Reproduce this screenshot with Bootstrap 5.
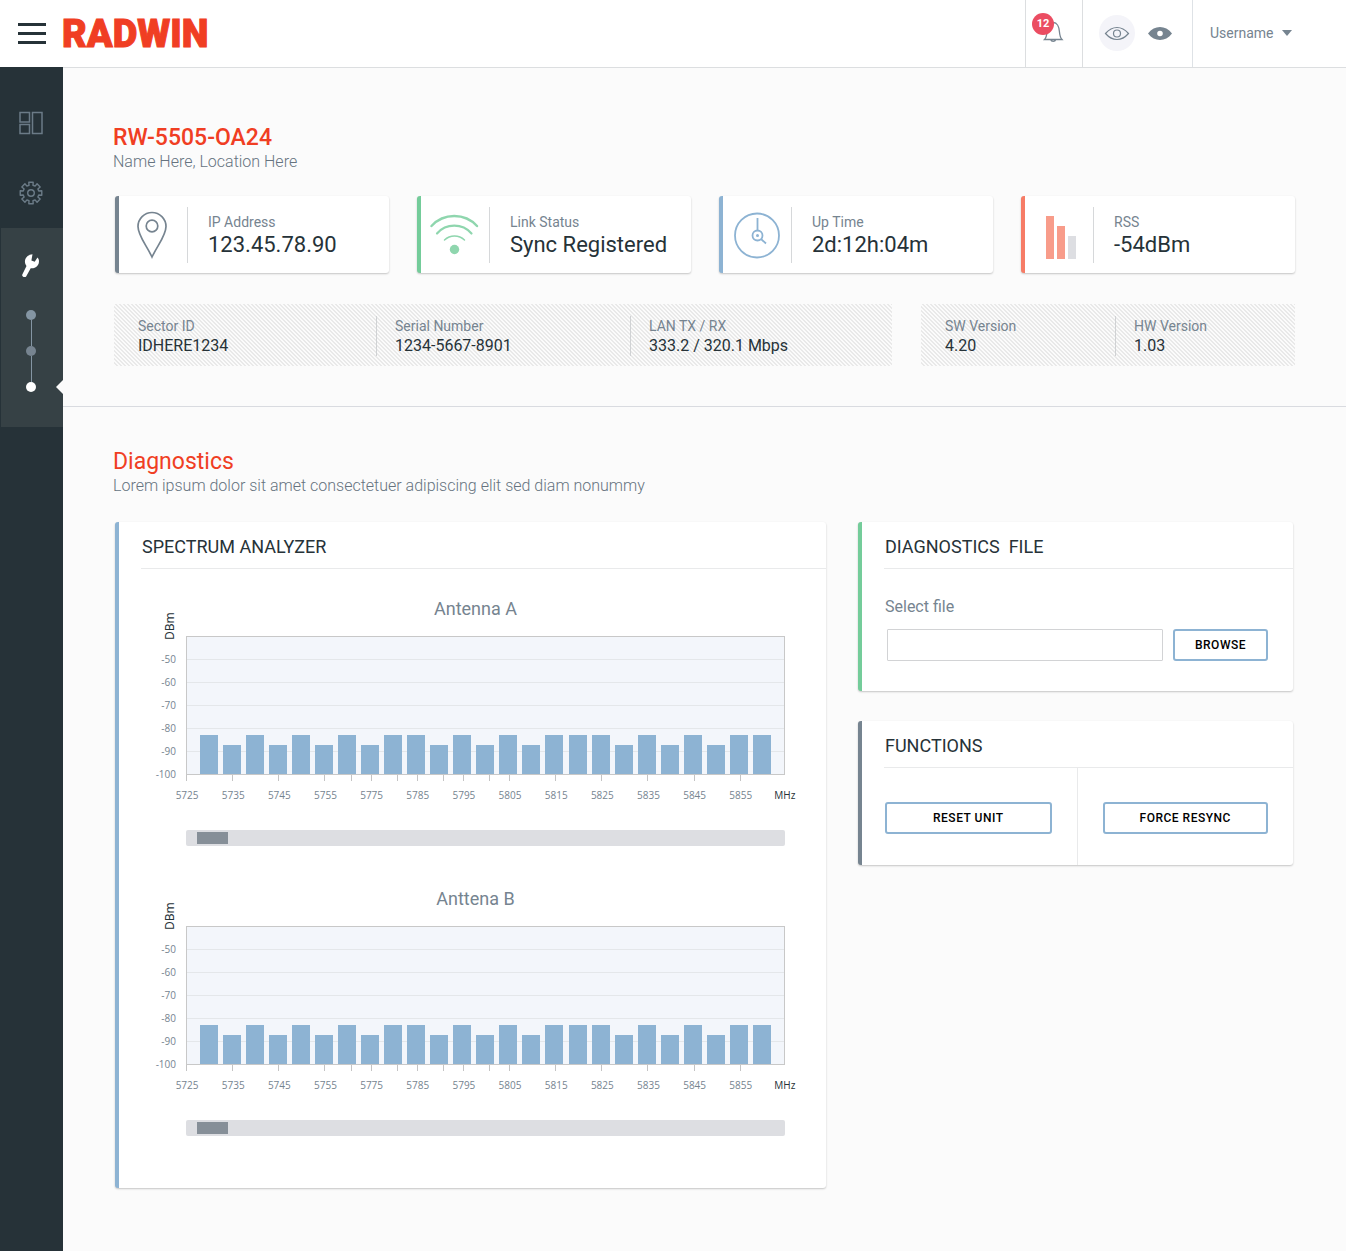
<!DOCTYPE html>
<html lang="en">
<head>
<meta charset="utf-8">
<meta name="viewport" content="width=device-width, initial-scale=1">
<title>RADWIN – Diagnostics</title>
<link rel="stylesheet" href="https://cdn.jsdelivr.net/npm/bootstrap@5.3.0/dist/css/bootstrap.min.css">
<style>
:root{--ink:#263238;--slate:#768490;--brand:#f03e23;--blue:#8db3d3;--green:#74cc9a;--line:#dcdee0}
body{font-family:Roboto,"Liberation Sans",sans-serif;color:var(--ink);background:#fbfbfb;font-size:14px;line-height:20px}
.topbar{height:68px;padding:0;background:#fff;border-bottom:1px solid var(--line)}
.burger{width:28px;height:21px;margin:0 16px 0 18px;padding:0;border:0;background:none}
.burger span{display:block;height:3px;background:var(--ink)}
.wordmark{font-size:38px;font-weight:900;line-height:69px;color:var(--brand);margin:0;padding:0;-webkit-text-stroke:1px var(--brand)}
.wordmark:hover{color:var(--brand)}
.cell{border-left:1px solid var(--line)}
.iconbtn{width:36px;height:36px;padding:0;border:0;border-radius:50%;background:none;color:var(--slate)}
.iconbtn svg{display:block}
.iconbtn.current{background:#f4f4f9}
.eyes{gap:7px;padding:0 14px 1px 16px}
.bell{width:57px;padding-bottom:3px}
.bell .count{top:13px;left:6px;width:22px;height:22px;border-radius:50%;background:#eb4d62;color:#fff;font:700 11px/22px Roboto,sans-serif}
.user{width:154px;padding:0 0 1px 17px;color:var(--slate);border:0;background:none}
.rail{width:63px;flex:none;background:var(--ink);padding-top:32px;margin-top:-1px;z-index:1}
.rail a{display:flex;justify-content:center;align-items:center;height:48px;padding-right:2px;color:#6b7b87}
.rail .gearlink{margin-top:22px}
.rail .tool{margin:11px 0 0 1px;height:199px;background:#364145;padding-top:14px}
.rail .tool a{color:#fff}
.steps{margin-top:20px;padding-right:2px}
.rail .steps a{height:10px;width:10px;padding:0;border-radius:50%;background:#778490}
.rail .steps a:first-child{background:#8495a3}
.rail .steps a.now{background:#fff}
.steps i{width:1px;height:26px;background:#8495a3}
.notch{right:0;bottom:33px;border:7px solid transparent;border-right-color:#fbfbfb;border-left:0}
.summary{padding:57px 51px 40px 51px;border-bottom:1px solid #d9dbe0}
.detail{padding:42px 51px 62px 51px}
h1,h2{font-size:23px;line-height:26px;margin:0 0 0 -1px;color:var(--brand)}
h1{font-weight:500}
h2{font-weight:400}
.lede{font-size:16px;font-weight:300;line-height:22px;color:#66737f;margin:0 0 0 -1px}
.panel{background:#fff;border-left:4px solid var(--slate);border-radius:3px;box-shadow:0 1px 2px rgba(0,0,0,.22)}
.tone-green{border-color:var(--green)}
.tone-blue{border-color:var(--blue)}
.tone-red{border-color:#f67c66}
.tiles{display:grid;grid-template-columns:repeat(4,1fr);gap:28px;margin:23px 0 0 1px}
.tile{height:77px;padding:11px 0 10px}
.tile .pic{width:69px;border-right:1px solid #d6d8da}
.tile .txt{padding-left:20px}
.cap{font-size:14px;line-height:20px;color:var(--slate)}
.big{font-size:22px;line-height:26px}
.facts{gap:29px;margin-top:31px}
.facts .wide{flex:778 1 0;grid-template-columns:262fr 254fr 262fr}
.facts .narrow{flex:374 1 0;grid-template-columns:194fr 180fr}
.hatch{display:grid;height:62px;background-image:linear-gradient(45deg,#e9e9e9 25%,transparent 25%,transparent 50%,#e9e9e9 50%,#e9e9e9 75%,transparent 75%);background-size:4px 4px;padding:12px 0 10px}
.fact{padding-left:18px;border-left:1px solid #d0d2d4}
.fact:first-child{border-left:0;padding-left:24px}
.fact .val{font-size:16px;line-height:20px}
.duo{display:grid;grid-template-columns:711fr 435fr;gap:32px;margin:25px 2px 0 1px;align-items:start}
.head{font-size:18px;line-height:26px;font-weight:400;color:var(--ink);margin:0 0 0 22px;padding:12px 0 8px 1px;border-bottom:1px solid #e9eaeb;height:47px}
.charts{padding:28px 17px 52px 23px}
.chart+.chart{margin-top:41px}
.chart h4{font-size:18px;line-height:24px;font-weight:400;color:var(--slate);text-align:center;margin:0 0 -7px}
.plotrow{margin-right:24px}
.yaxis{width:34px;margin-right:10px;font:10px/23px "Open Sans",sans-serif;color:var(--slate);text-align:right}
.yaxis .unit{writing-mode:vertical-rl;transform:rotate(180deg);height:26px;font:12px/12px "Noto Sans",sans-serif;color:var(--ink);margin:0 0 8px auto}
.plotcol{padding-top:22px}
.plot{height:139px;border:1px solid #c8c8c8;background:#f3f6fb repeating-linear-gradient(transparent 0 22px,#e4e7ea 22px 23px);padding:0 13px}
.plot b{width:18px;background:var(--blue)}
.xaxis{margin:0 -22px 0 -23px;font:10px/14px "Open Sans",sans-serif;color:var(--slate);text-align:center}
.xaxis span{flex:1 1 0;height:34px;padding:13px 0 0 2px;background:linear-gradient(#c4c4c4,#c4c4c4) 23px 0/1px 6px no-repeat}
.xaxis span.minor{background:linear-gradient(#c4c4c4,#c4c4c4) 23px 0/1px 6px no-repeat,linear-gradient(#c4c4c4,#c4c4c4) 3px 0/1px 6px no-repeat}
.xaxis span.mhz{background:none;color:var(--ink);padding-left:0}
.pan{display:block;-webkit-appearance:none;appearance:none;width:100%;height:16px;margin:21px 0 0;background:#dddee2;border-radius:2px}
.pan::-webkit-slider-thumb{-webkit-appearance:none;width:31px;height:12px;background:#868f98;border:0;border-radius:0}
.pan::-moz-range-thumb{width:31px;height:12px;background:#868f98;border:0;border-radius:0}
.act{height:32px;padding:0;border:2px solid var(--blue);border-radius:3px;background:#fff;color:#000;font-size:12px;font-weight:500;line-height:28px;letter-spacing:.5px}
.act:hover{background:#f3f6fb;border-color:var(--blue);color:#000}
.filebody{padding:27px 25px 30px 23px}
.filebody .d-flex{gap:10px}
.filebody label{font-size:16px;line-height:22px;color:var(--slate);margin-bottom:11px}
.filebody .form-control{height:32px;border:1px solid #d2d3d5;border-radius:1px;margin-left:2px}
.filebody .act{width:95px;flex:none}
.functions{margin-top:30px}
.fn{padding:34px 25px 31px}
.fn:first-child{padding-left:23px;border-right:1px solid #e9eaeb}
</style>
</head>
<body class="min-vh-100 d-flex flex-column">
<header class="topbar d-flex align-items-stretch">
  <button class="burger align-self-center d-flex flex-column justify-content-between" aria-label="Menu"><span class="w-100"></span><span class="w-100"></span><span class="w-100"></span></button>
  <a class="wordmark navbar-brand" href="#">RADWIN</a>
  <div class="cell bell position-relative ms-auto d-flex">
    <button class="iconbtn align-self-center ms-2" aria-label="Notifications"><svg width="36" height="36" viewBox="0 0 36 36" fill="none" stroke="currentColor" stroke-width="1.3"><path d="M10.500 25.500h17.500c-2-2-2.300-4.500-2.600-8-.3-4.500-2.300-9-6.150-9s-5.850 4.500-6.150 9c-.3 3.500-.6 6-2.600 8zM16.700 25.800a2.600 2.200 0 0 0 5 0"/></svg></button>
    <span class="count position-absolute text-center">12</span>
  </div>
  <div class="cell eyes d-flex align-items-center">
    <button class="iconbtn current" aria-label="Outline view"><svg width="36" height="36" viewBox="0 0 36 36" fill="none" stroke="currentColor" stroke-width="1.200"><path d="M6.500 18.500C10 14.500 13.500 12.500 18 12.500s8 2 11.500 6c-3.500 4-7 6-11.500 6s-8-2-11.500-6z"/><circle cx="18" cy="18.500" r="3.500"/></svg></button>
    <button class="iconbtn" aria-label="Solid view"><svg width="36" height="36" viewBox="0 0 36 36"><path fill="currentColor" fill-rule="evenodd" d="M6 18.500c3.500-4.500 7.500-6.500 12-6.500s8.500 2 12 6.500C26.500 23 22.500 25 18 25S9.500 23 6 18.500zm12-2.800a2.800 2.800 0 1 0 0 5.600 2.800 2.800 0 0 0 0-5.600z"/></svg></button>
  </div>
  <button class="cell user border-start d-flex align-items-center gap-2">Username <svg width="10" height="6" viewBox="0 0 10 6"><path fill="currentColor" d="M0 0h10L5 6z"/></svg></button>
</header>
<div class="d-flex flex-grow-1">
  <nav class="rail position-relative" aria-label="Main">
    <a href="#" aria-label="Dashboard"><svg width="24" height="24" viewBox="0 0 24 24" fill="none" stroke="currentColor" stroke-width="1.500"><path d="M1 1.500h9.500V11H1zM1 13.500h9.500v9H1zM13.500 1.500H23v21h-9.500z"/></svg></a>
    <a class="gearlink" href="#" aria-label="Settings"><svg id="gear" width="24" height="24" viewBox="-12 -12 24 24" fill="none" stroke="currentColor" stroke-width="1.400" stroke-linejoin="round"><path/><circle r="3.300"/></svg></a>
    <div class="tool position-relative">
      <a href="#" aria-label="Tools"><svg width="20" height="26" viewBox="0 0 20 26" fill="currentColor"><path d="M11.500 1.200C6.500 1.500 3 5.500 4.200 10.500c.3 1 .7 1.800 1.300 2.500L1.300 21.500c-.8 1.700 1.600 3.300 3.700 2.300L9.700 15.300c4.800.6 9-3 8.200-8.300-.2-1-.7-1.800-1.400-2.500l-2.800 4.300-3.300-1.300z"/></svg></a>
      <div class="steps d-flex flex-column align-items-center"><a href="#" aria-label="Step 1"></a><i></i><a href="#" aria-label="Step 2"></a><i></i><a class="now" href="#" aria-label="Step 3"></a></div>
      <span class="notch position-absolute"></span>
    </div>
  </nav>
  <main class="flex-grow-1">
    <section class="summary">
      <h1>RW-5505-OA24</h1>
      <p class="lede">Name Here, Location Here</p>
      <div class="tiles">
        <div class="panel tile d-flex"><div class="pic d-flex align-items-center justify-content-center"><svg width="50" height="50" viewBox="0 0 50 50" fill="none" stroke="#768490" stroke-width="1.700"><path d="M24 47C18 34.500 10 25.500 10 16.500a14 14 0 0 1 28 0C38 25.500 30 34.500 24 47z"/><circle cx="24" cy="16" r="5.800"/></svg></div><div class="txt align-self-center"><div class="cap">IP Address</div><div class="big">123.45.78.90</div></div></div>
        <div class="panel tile tone-green d-flex"><div class="pic d-flex align-items-center justify-content-center"><svg width="50" height="50" viewBox="0 0 50 50" fill="none" stroke="#8fd6ae" stroke-linecap="round"><path stroke-width="2.400" d="M1.500 16a31 31 0 0 1 45.500 0"/><path stroke-width="2.200" d="M7 23.500a23 23 0 0 1 34.500 0"/><path stroke-width="1.500" d="M14.500 30a14.500 14.500 0 0 1 20 0"/><circle cx="24.500" cy="39.500" r="4.700" fill="#8fd6ae" stroke="none"/></svg></div><div class="txt align-self-center"><div class="cap">Link Status</div><div class="big">Sync Registered</div></div></div>
        <div class="panel tile tone-blue d-flex"><div class="pic d-flex align-items-center justify-content-center"><svg width="50" height="50" viewBox="0 0 50 50" fill="none" stroke="#8db3d3" stroke-width="1.800"><circle cx="25" cy="25.500" r="22"/><circle cx="25.500" cy="25.500" r="5"/><path d="M25.500 8v12.500M29 29l5 4.500"/><circle cx="25.500" cy="25.500" r="1.500" fill="#8db3d3" stroke="none"/></svg></div><div class="txt align-self-center"><div class="cap">Up Time</div><div class="big">2d:12h:04m</div></div></div>
        <div class="panel tile tone-red d-flex"><div class="pic d-flex align-items-center justify-content-center ps-1"><svg width="30" height="47" viewBox="0 -4 30 47"><path fill="#f89c8a" d="M0 0h8v43H0zM11 10h8v33h-8z"/><path fill="#dddee2" d="M22 20h8v23h-8z"/></svg></div><div class="txt align-self-center"><div class="cap">RSS</div><div class="big">-54dBm</div></div></div>
      </div>
      <div class="facts d-flex">
        <div class="hatch wide">
          <div class="fact"><div class="cap">Sector ID</div><div class="val">IDHERE1234</div></div>
          <div class="fact"><div class="cap">Serial Number</div><div class="val">1234-5667-8901</div></div>
          <div class="fact"><div class="cap">LAN TX / RX</div><div class="val">333.2 / 320.1 Mbps</div></div>
        </div>
        <div class="hatch narrow">
          <div class="fact"><div class="cap">SW Version</div><div class="val">4.20</div></div>
          <div class="fact"><div class="cap">HW Version</div><div class="val">1.03</div></div>
        </div>
      </div>
    </section>
    <section class="detail">
      <h2>Diagnostics</h2>
      <p class="lede">Lorem ipsum dolor sit amet consectetuer adipiscing elit sed diam nonummy</p>
      <div class="duo">
        <div class="panel tone-blue">
          <h3 class="head">SPECTRUM ANALYZER</h3>
          <div class="charts">
            <div class="chart" data-title="Antenna A"></div>
            <div class="chart" data-title="Anttena B"></div>
          </div>
        </div>
        <div>
          <form class="panel tone-green">
            <h3 class="head">DIAGNOSTICS&nbsp; FILE</h3>
            <div class="filebody">
              <label for="diagfile">Select file</label>
              <div class="d-flex"><input class="form-control" id="diagfile" type="text"><button class="btn act" type="button">BROWSE</button></div>
            </div>
          </form>
          <div class="panel functions">
            <h3 class="head">FUNCTIONS</h3>
            <div class="d-flex">
              <div class="fn w-50"><button class="btn act w-100">RESET UNIT</button></div>
              <div class="fn w-50"><button class="btn act w-100">FORCE RESYNC</button></div>
            </div>
          </div>
        </div>
      </div>
    </section>
  </main>
</div>
<script src="https://cdn.jsdelivr.net/npm/bootstrap@5.3.0/dist/js/bootstrap.bundle.min.js"></script>
<script>
// One letter per channel: H is a strong reading, L a weak one.
const levels = {H: 39, L: 29};
const readings = 'HLHLHLHLHHLHLHLHHHLHLHLHH';
const freqs = [5725,5735,5745,5755,5775,5785,5795,5805,5815,5825,5835,5845,5855];
const minor = [5775,5785,5795,5805];
document.querySelectorAll('.chart').forEach(el => {
  const t = el.dataset.title;
  el.innerHTML = `<h4>${t}</h4><div class="plotrow d-flex">
    <div class="yaxis"><div class="unit">DBm</div>${[-50,-60,-70,-80,-90,-100].map(v => `<div>${v}</div>`).join('')}</div>
    <div class="plotcol flex-grow-1">
      <div class="plot d-flex align-items-end justify-content-between">${[...readings].map(r => `<b style="height:${levels[r]}px"></b>`).join('')}</div>
      <div class="xaxis d-flex">${freqs.map(f => `<span${minor.includes(f) ? ' class="minor"' : ''}>${f}</span>`).join('')}<span class="mhz">MHz</span></div>
      <input class="pan" type="range" min="0" max="100" value="2" aria-label="${t} frequency window">
    </div></div>`;
});
// Eight-toothed cog outline.
let d = '';
for (let i = 0; i < 8; i++) {
  [[8,-.25],[11,-.2],[11,.2],[8,.25]].forEach(([r, o]) => {
    const a = i * Math.PI / 4 + o;
    d += (d ? 'L' : 'M') + (r * Math.cos(a)).toFixed(2) + ' ' + (r * Math.sin(a)).toFixed(2);
  });
}
document.querySelector('#gear path').setAttribute('d', d + 'Z');
</script>
</body>
</html>
